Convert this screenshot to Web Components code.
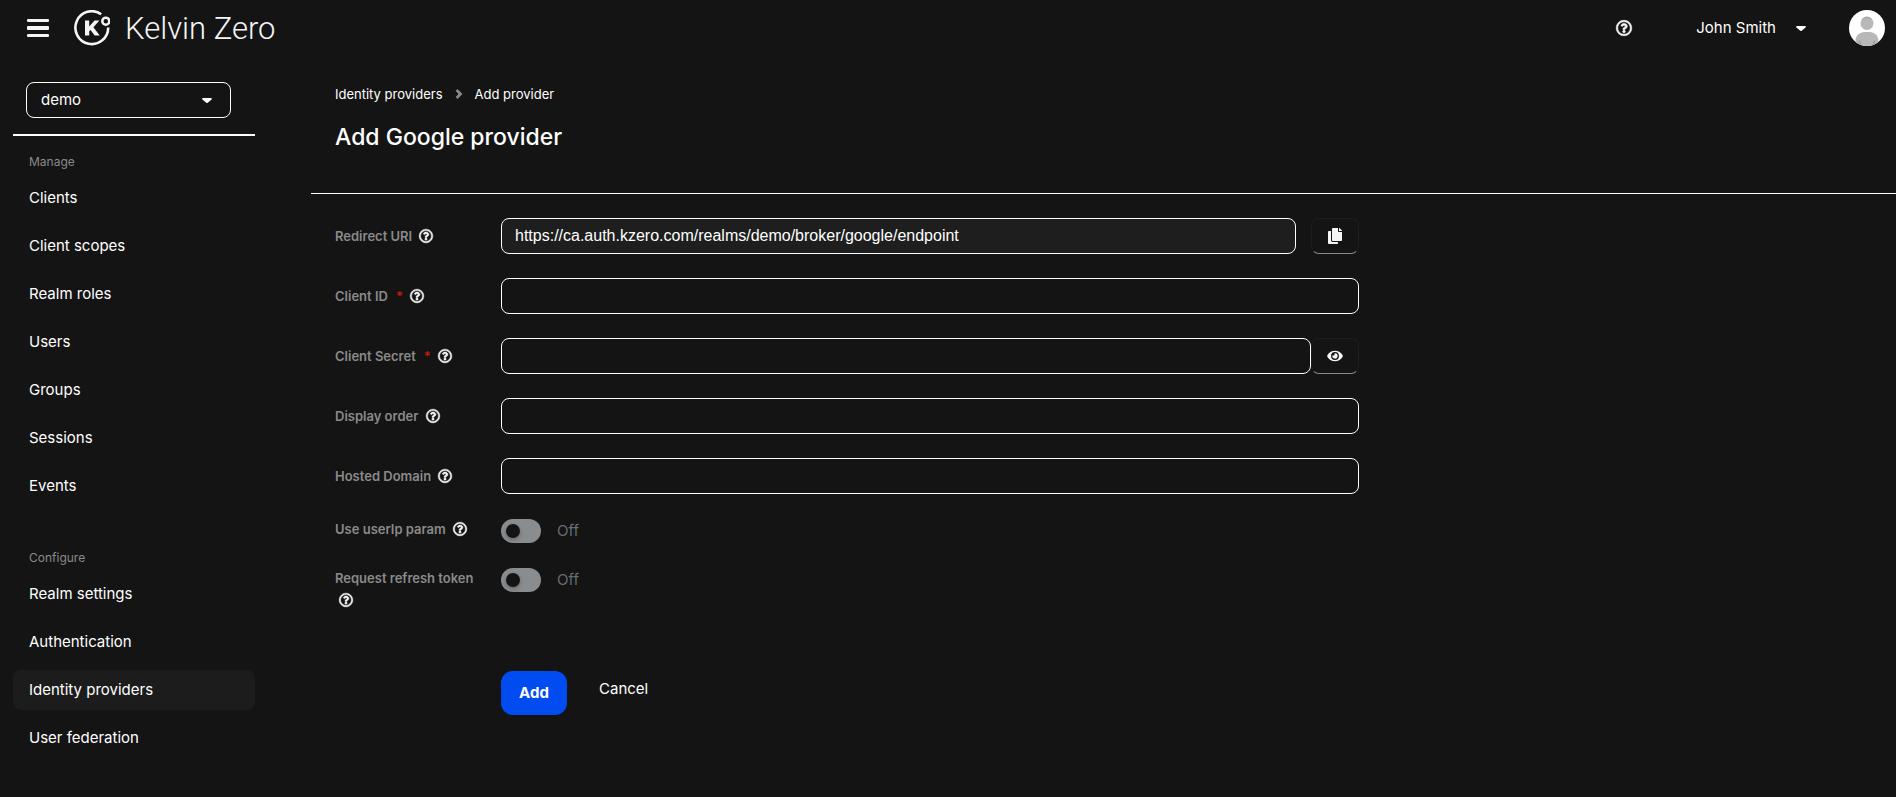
<!DOCTYPE html>
<html lang="en">
<head>
<meta charset="utf-8">
<title>Add Google provider</title>
<style>
html, body { margin: 0; min-height: 100%; background: #141414; }
body { color: #fff; font: 15px/20px Inter, "Liberation Sans", sans-serif; }
</style>
</head>
<body>
<kz-app>
  <kz-header slot="header" user="John Smith"></kz-header>
  <kz-sidebar slot="sidebar">
    <kz-nav-group label="Manage">
      <kz-nav-item>Clients</kz-nav-item>
      <kz-nav-item>Client scopes</kz-nav-item>
      <kz-nav-item>Realm roles</kz-nav-item>
      <kz-nav-item>Users</kz-nav-item>
      <kz-nav-item>Groups</kz-nav-item>
      <kz-nav-item>Sessions</kz-nav-item>
      <kz-nav-item>Events</kz-nav-item>
    </kz-nav-group>
    <kz-nav-group label="Configure">
      <kz-nav-item>Realm settings</kz-nav-item>
      <kz-nav-item>Authentication</kz-nav-item>
      <kz-nav-item current>Identity providers</kz-nav-item>
      <kz-nav-item>User federation</kz-nav-item>
    </kz-nav-group>
  </kz-sidebar>
  <kz-page-title>Add Google provider</kz-page-title>
  <kz-form>
    <kz-field label="Redirect URI" value="https://ca.auth.kzero.com/realms/demo/broker/google/endpoint" readonly action="copy"></kz-field>
    <kz-field label="Client ID" required></kz-field>
    <kz-field label="Client Secret" required type="password" action="eye"></kz-field>
    <kz-field label="Display order"></kz-field>
    <kz-field label="Hosted Domain"></kz-field>
    <kz-switch label="Use userIp param"></kz-switch>
    <kz-switch label="Request refresh token"></kz-switch>
  </kz-form>
</kz-app>

<script>
const define = (name, render) => customElements.define(name, class extends HTMLElement {
  connectedCallback() {
    if (this.shadowRoot) return;
    this.attachShadow({ mode: 'open' }).innerHTML = render(this);
  }
});

const ICONS = {
  help: ['0 0 512 512', 'M256 8C119.043 8 8 119.083 8 256c0 136.997 111.043 248 248 248s248-111.003 248-248C504 119.083 392.957 8 256 8zm0 448c-110.532 0-200-89.431-200-200 0-110.495 89.472-200 200-200 110.491 0 200 89.471 200 200 0 110.53-89.431 200-200 200zm107.244-255.2c0 67.052-72.421 68.084-72.421 92.863V300c0 6.627-5.373 12-12 12h-45.647c-6.627 0-12-5.373-12-12v-8.659c0-35.745 27.1-50.034 47.579-61.516 17.561-9.845 28.324-16.541 28.324-29.579 0-17.246-21.999-28.693-39.784-28.693-23.189 0-33.894 10.977-48.942 29.969-4.057 5.12-11.46 6.071-16.666 2.124l-27.824-21.098c-5.107-3.872-6.251-11.066-2.644-16.363C184.846 131.491 214.94 112 261.794 112c49.071 0 101.45 38.304 101.45 88.8zM298 368c0 23.159-18.841 42-42 42s-42-18.841-42-42 18.841-42 42-42 42 18.841 42 42z'],
  copy: ['0 0 448 512', 'M320 448v40c0 13.255-10.745 24-24 24H24c-13.255 0-24-10.745-24-24V120c0-13.255 10.745-24 24-24h72v296c0 30.879 25.121 56 56 56h168zm0-344V0H152c-13.255 0-24 10.745-24 24v368c0 13.255 10.745 24 24 24h272c13.255 0 24-10.745 24-24V128H344c-13.2 0-24-10.8-24-24zm120.971-31.029L375.029 7.029A24 24 0 0 0 358.059 0H352v96h96v-6.059a24 24 0 0 0-7.029-16.97z'],
  eye: ['0 0 576 512', 'M572.52 241.4C518.29 135.59 410.93 64 288 64S57.68 135.64 3.48 241.41a32.35 32.35 0 0 0 0 29.19C57.71 376.41 165.07 448 288 448s230.32-71.64 284.52-177.41a32.35 32.35 0 0 0 0-29.19zM288 400a144 144 0 1 1 144-144 143.93 143.93 0 0 1-144 144zm0-240a95.31 95.31 0 0 0-25.31 3.79 47.85 47.85 0 0 1-66.9 66.9A95.78 95.78 0 1 0 288 160z'],
  caret: ['0 0 10 5', 'M1 0h8c.8 0 1.200.9.600 1.400L5.700 4.700a1 1 0 0 1-1.400 0L.4 1.400C-.2.9.2 0 1 0z'],
  angle: ['0 0 256 512', 'M224.300 273l-136 136c-9.400 9.400-24.600 9.400-33.900 0l-22.600-22.600c-9.400-9.400-9.400-24.600 0-33.900l96.400-96.400-96.400-96.400c-9.400-9.400-9.400-24.600 0-33.900L54.300 103c9.400-9.400 24.600-9.400 33.900 0l136 136c9.500 9.400 9.500 24.600.1 34z']
};
const icon = (name, w, h) =>
  `<svg class="${name}" width="${w}" height="${h}" viewBox="${ICONS[name][0]}" fill="currentColor" aria-hidden="true"><path d="${ICONS[name][1]}"/></svg>`;

/* Shared reset for plain icon buttons */
const RESET = `
  *, *::before { box-sizing: border-box; }
  button { margin: 0; padding: 0; border: 0; background: none; color: #f5f5f5; font: inherit; cursor: pointer; }
  svg { display: block; overflow: visible; }
  svg.help { stroke: currentColor; stroke-width: 20px; }`;

/* Label column shared by text fields and switches */
const LABEL = `
  :host { display: grid; grid-template-columns: 150px minmax(0, 1fr); column-gap: 16px; align-items: center; }
  .label { color: #8a8a8a; font-size: 13px; font-weight: 600; line-height: 22px; }
  .req { color: #c9190b; margin-left: 8px; }
  button.help { margin-left: 4px; vertical-align: -2px; }`;
const labelCell = el => `
  <div class="label"><label for="control">${el.getAttribute('label')}</label>${
    el.hasAttribute('required') ? '<span class="req" aria-hidden="true">*</span>' : ''}
    <button class="help" type="button" aria-label="Help for ${el.getAttribute('label')}">${icon('help', 14, 14)}</button></div>`;

define('kz-app', () => `
  <style>
    :host { display: grid; grid-template-columns: 311px minmax(0, 1fr); grid-template-rows: auto 1fr; min-height: 100vh; }
    slot[name=header] { display: block; grid-column: 1 / -1; }
  </style>
  <slot name="header"></slot>
  <slot name="sidebar"></slot>
  <main><slot></slot></main>`);

define('kz-logo', () => `
  <style>
    :host { display: flex; align-items: center; gap: 15px; color: #f5f5f5; }
    span { padding-top: 1px; font: 300 31px/36px Roboto, sans-serif; }
    svg { display: block; }
  </style>
  <svg width="36" height="36" viewBox="0 0 36 36" fill="none" stroke="currentColor" aria-hidden="true">
    <path d="M27.200 4.200A16.400 16.400 0 1 0 34.200 17.500" stroke-width="2.600"/>
    <circle cx="31.800" cy="11.200" r="3.500" stroke-width="2.500"/>
    <path d="M11 10.500h4.200v6.100l5.300-6.100h4.900l-6 6.800 6.300 8.200h-5l-4.200-5.600-1.300 1.400v4.200H11z" fill="currentColor" stroke="none"/>
  </svg>
  <span>Kelvin Zero</span>`);

define('kz-header', el => `
  <style>${RESET}
    :host { display: block; }
    header { display: flex; align-items: center; height: 56px; padding: 0 11px 0 27px; }
    kz-logo { margin-left: 25px; }
    .spacer { flex: 1; }
    .user { display: flex; align-items: center; gap: 20px; margin: 0 43px 0 64px; color: #fff; }
  </style>
  <header>
    <button type="button" aria-label="Toggle navigation">
      <svg width="22" height="20" viewBox="0 0 22 20" fill="currentColor"><rect y="1" width="22" height="3" rx="1"/><rect y="8" width="22" height="4" rx="1"/><rect y="16" width="22" height="3" rx="1"/></svg>
    </button>
    <kz-logo></kz-logo>
    <div class="spacer"></div>
    <button type="button" aria-label="Help">${icon('help', 16, 16)}</button>
    <button class="user" type="button">${el.getAttribute('user')}${icon('caret', 10, 5)}</button>
    <svg width="36" height="36" viewBox="0 0 36 36" role="img" aria-label="Avatar">
      <clipPath id="disc"><circle cx="18" cy="18" r="18"/></clipPath>
      <g clip-path="url(#disc)">
        <path fill="#fff" d="M0 0h36v36H0z"/>
        <path fill="#b8b8b8" d="M6.500 36v-5c0-5.500 4-9 9-9h5c5 0 9 3.500 9 9v5z"/>
        <path fill="#a3a3a3" d="M10 31l1-1 2 6H9zM26 31l-1-1-2 6h4z"/>
        <circle cx="18" cy="13.500" r="6.500" fill="#b8b8b8"/>
        <path fill="#a8a8a8" d="M12 11c1-3 3.500-4.500 6-4.500s5 1.500 6 4.500c-2-2-4-2.500-6-2.500s-4 .5-6 2.500z"/>
      </g>
    </svg>
  </header>`);

define('kz-sidebar', () => `
  <style>${RESET}
    :host { display: block; padding: 26px 56px 40px 13px; }
    .realm { display: grid; align-items: center; margin: 0 24px 16px 13px; }
    .realm > * { grid-area: 1 / 1; }
    .realm svg { justify-self: end; margin-right: 19px; pointer-events: none; }
    select { appearance: none; width: 100%; height: 36px; padding: 0 14px; border: 1px solid #fff; border-radius: 8px; background: #141414; color: #fff; font: inherit; }
    hr { height: 2px; margin: 0 0 16px; border: 0; background: #fff; }
    nav { display: grid; gap: 42px; }
  </style>
  <div class="realm"><select aria-label="Realm"><option>demo</option></select>${icon('caret', 10, 5)}</div>
  <hr>
  <nav aria-label="Main"><slot></slot></nav>`);

define('kz-nav-group', el => `
  <style>
    :host { display: grid; gap: 8px; }
    h2 { margin: 0 16px -2px; color: #8a8a8a; font-size: 12px; font-weight: 400; line-height: 20px; }
  </style>
  <h2>${el.getAttribute('label')}</h2><slot></slot>`);

define('kz-nav-item', () => `
  <style>
    :host { display: block; border-radius: 8px; }
    :host([current]) { background: #1c1c1c; }
    a { display: block; padding: 10px 16px; color: #fff; text-decoration: none; }
  </style>
  <a href="#"><slot></slot></a>`);

define('kz-page-title', () => `
  <style>
    :host { display: block; padding: 28px 24px 39px; border-bottom: 1px solid #fff; }
    nav { display: flex; align-items: center; gap: 12px; font-size: 13px; }
    a { color: #fff; text-decoration: none; }
    svg { display: block; color: #8a8a8a; stroke: currentColor; stroke-width: 30px; }
    h1 { margin: 16px 0 0; font-size: 23px; font-weight: 500; line-height: 34px; }
  </style>
  <nav aria-label="Breadcrumb"><a href="#">Identity providers</a>${icon('angle', 8, 14)}<span>Add provider</span></nav>
  <h1><slot></slot></h1>`);

define('kz-form', () => `
  <style>${RESET}
    :host { display: block; padding: 24px; }
    form { display: grid; gap: 24px; max-width: 1024px; }
    .actions { display: flex; align-items: flex-start; gap: 32px; padding: 36px 0 0 166px; }
    .primary { width: 66px; height: 44px; border-radius: 12px; background: #004cf0; color: #fff; font-weight: 700; }
    .link { height: 36px; color: #fff; }
  </style>
  <form onsubmit="return false">
    <slot></slot>
    <div class="actions"><button class="primary">Add</button><button class="link" type="button">Cancel</button></div>
  </form>`);

define('kz-field', el => {
  const action = el.getAttribute('action');
  return `
  <style>${RESET}${LABEL}
    .control { display: flex; }
    .control.copy { gap: 15px; }
    input { flex: 1; min-width: 0; height: 36px; padding: 0 13px; border: 1px solid #fff; border-radius: 8px; outline: 0; background: transparent; color: #fff; font: 16px "Liberation Sans", Arial, sans-serif; }
    input[readonly] { background: #1e1e1e; }
    .action { display: grid; place-items: center; width: 48px; height: 36px; border: 1px solid #1e1e1e; border-bottom-color: #8a8a8a; border-radius: 8px; }
  </style>
  ${labelCell(el)}
  <div class="control ${action || ''}">
    <input id="control" type="${el.getAttribute('type') || 'text'}" value="${el.getAttribute('value') || ''}" ${el.hasAttribute('readonly') ? 'readonly' : ''} ${el.hasAttribute('required') ? 'required' : ''}>
    ${action === 'copy' ? `<button class="action" type="button" aria-label="Copy">${icon('copy', 14, 16)}</button>` : ''}
    ${action === 'eye' ? `<button class="action" type="button" aria-label="Show secret">${icon('eye', 16, 14)}</button>` : ''}
  </div>`;
});

define('kz-switch', el => `
  <style>${RESET}${LABEL}
    :host { align-items: start; }
    .control { display: flex; align-items: center; gap: 16px; padding-top: 1px; color: #6a6e73; }
    input { appearance: none; width: 40px; height: 24px; margin: 0; padding: 5px; border-radius: 12px; background: #8a8d90; }
    input::before { content: ""; display: block; width: 14px; height: 14px; border-radius: 50%; background: #141414; box-shadow: 0 2px 4px #0004; }
    input:checked { background: #004cf0; }
    input:checked::before { margin-left: 16px; }
  </style>
  ${labelCell(el)}
  <div class="control"><input id="control" type="checkbox" role="switch"><span>Off</span></div>`);
</script>
</body>
</html>
